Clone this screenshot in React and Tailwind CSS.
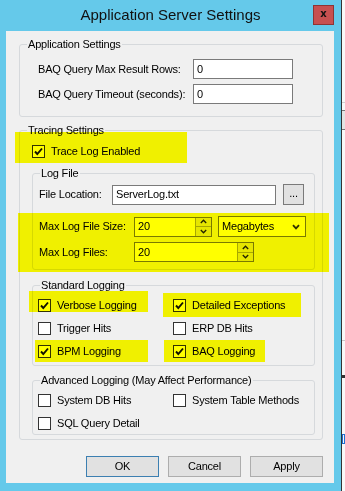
import React from "react";

// Dialog: Application Server Settings (Win8 style) with yellow marker highlights

const Check = ({ checked }) => (
  <span className="w-[13px] h-[13px] shrink-0 border border-[#333] bg-white flex items-center justify-center">
    {checked && (
      <svg width="11" height="11" viewBox="0 0 11 11">
        <path d="M2 5.5 L4.3 8 L9 2.5" fill="none" stroke="#111" strokeWidth="1.9" />
      </svg>
    )}
  </span>
);

const CheckRow = ({ checked, label }) => (
  <div className="flex items-center gap-[6px] h-[13px]">
    <Check checked={checked} />
    <span className="leading-[13px] whitespace-nowrap">{label}</span>
  </div>
);

const Group = ({ title, className, children }) => (
  <div className={`relative border border-[#d6d9dc] rounded-[3px] ${className}`}>
    <span className="absolute -top-[8px] left-[7px] bg-[#f0f0f0] px-[1px] leading-[14px] whitespace-nowrap">
      {title}
    </span>
    {children}
  </div>
);

const TextBox = ({ value, className }) => (
  <div className={`h-[20px] border border-[#7a7a7a] bg-white pl-[3px] flex items-center ${className}`}>
    {value}
  </div>
);

const Chevron = ({ up }) => (
  <svg width="7" height="5" viewBox="0 0 7 5">
    <path d={up ? "M0.8 4 L3.5 1.2 L6.2 4" : "M0.8 1 L3.5 3.8 L6.2 1"} fill="none" stroke="#222" strokeWidth="1.3" />
  </svg>
);

const Spin = ({ value, className }) => (
  <div className={`h-[20px] border border-[#7a7a7a] bg-white flex ${className}`}>
    <div className="flex-1 pl-[3px] flex items-center">{value}</div>
    <div className="w-[16px] flex flex-col bg-[#e6e6e6] border-l border-[#a8a8a8]">
      <div className="flex-1 flex items-center justify-center border-b border-[#a8a8a8]">
        <Chevron up />
      </div>
      <div className="flex-1 flex items-center justify-center">
        <Chevron />
      </div>
    </div>
  </div>
);

const Btn = ({ children, primary }) => (
  <div
    className={`w-[73px] h-[21px] flex items-center justify-center bg-[#e1e1e1] border ${
      primary ? "border-[#3c7fb1]" : "border-[#adadad]"
    }`}
  >
    {children}
  </div>
);

const highlights = [
  "left-[15px] top-[132px] w-[172px] h-[31px]",
  "left-[18px] top-[213px] w-[311px] h-[59px]",
  "left-[29px] top-[291px] w-[119px] h-[21px]",
  "left-[163px] top-[293px] w-[138px] h-[24px]",
  "left-[35px] top-[340px] w-[113px] h-[22px]",
  "left-[164px] top-[340px] w-[101px] h-[22px]",
];

export default function App() {
  return (
    <div className="flex w-[345px] h-[491px] bg-white text-[11px] tracking-[-0.2px] text-black font-['Liberation_Sans',Arial,sans-serif]">
      <div className="relative w-[341px] h-full bg-[#65c9ea] flex flex-col">
        {/* Title bar */}
        <div className="h-[31px] grid grid-cols-[1fr_auto_1fr] items-center">
          <div />
          <div className="text-[15px] tracking-normal text-[#111] -mt-[1px]">Application Server Settings</div>
          <div className="flex justify-end pr-[7px] self-start pt-[5px]">
            <div className="w-[21px] h-[20px] bg-[#c75050] border border-[#8e3434] flex items-center justify-center">
              <span className="text-[10px] font-bold leading-none font-['DejaVu_Sans',sans-serif] text-[#111] -mt-[2px]">x</span>
            </div>
          </div>
        </div>

        {/* Client area */}
        <div className="ml-[6px] w-[328px] h-[452px] bg-[#f0f0f0] flex flex-col">
          <Group title="Application Settings" className="ml-[13px] mt-[13px] w-[304px] h-[73px] pt-[14px] pl-[18px]">
            <div className="flex flex-col gap-[5px]">
              <div className="flex items-center">
                <span className="w-[155px]">BAQ Query Max Result Rows:</span>
                <TextBox value="0" className="w-[100px]" />
              </div>
              <div className="flex items-center">
                <span className="w-[155px]">BAQ Query Timeout (seconds):</span>
                <TextBox value="0" className="w-[100px]" />
              </div>
            </div>
          </Group>

          <Group title="Tracing Settings" className="ml-[13px] mt-[13px] w-[304px] h-[310px] pt-[14px] pl-[12px]">
            <CheckRow checked label="Trace Log Enabled" />

            <Group title="Log File" className="mt-[15px] w-[283px] h-[97px] pt-[10px] pl-[6px]">
              <div className="flex items-center h-[21px]">
                <span className="w-[73px]">File Location:</span>
                <TextBox value="ServerLog.txt" className="w-[164px] h-[19px] pl-[2px]" />
                <div className="ml-[7px] w-[21px] h-[21px] bg-[#e1e1e1] border border-[#7a7a7a] flex items-center justify-center pb-[3px]">
                  ...
                </div>
              </div>
              <div className="flex items-center h-[21px] mt-[11px]">
                <span className="w-[95px]">Max Log File Size:</span>
                <Spin value="20" className="w-[78px]" />
                <div className="ml-[6px] w-[88px] h-[21px] border border-[#7a7a7a] bg-white flex items-center justify-between pl-[3px] pr-[5px]">
                  <span>Megabytes</span>
                  <svg width="8" height="6" viewBox="0 0 8 6">
                    <path d="M1 1.2 L4 4.4 L7 1.2" fill="none" stroke="#333" strokeWidth="1.8" />
                  </svg>
                </div>
              </div>
              <div className="flex items-center h-[20px] mt-[5px]">
                <span className="w-[95px]">Max Log Files:</span>
                <Spin value="20" className="w-[120px]" />
              </div>
            </Group>

            <Group title="Standard Logging" className="mt-[15px] w-[283px] h-[81px] pt-[13px] pl-[5px]">
              <div className="grid grid-cols-[135px_1fr] gap-y-[10px]">
                <CheckRow checked label="Verbose Logging" />
                <CheckRow checked label="Detailed Exceptions" />
                <CheckRow label="Trigger Hits" />
                <CheckRow label="ERP DB Hits" />
                <CheckRow checked label="BPM Logging" />
                <CheckRow checked label="BAQ Logging" />
              </div>
            </Group>

            <Group title="Advanced Logging (May Affect Performance)" className="mt-[14px] w-[283px] h-[55px] pt-[13px] pl-[5px]">
              <div className="grid grid-cols-[135px_1fr] gap-y-[10px]">
                <CheckRow label="System DB Hits" />
                <CheckRow label="System Table Methods" />
                <CheckRow label="SQL Query Detail" />
              </div>
            </Group>
          </Group>

          <div className="mt-[16px] flex justify-end gap-[9px] pr-[11px]">
            <Btn primary>OK</Btn>
            <Btn>Cancel</Btn>
            <Btn>Apply</Btn>
          </div>
        </div>

        {/* marker highlights drawn over the screenshot */}
        {highlights.map((h, i) => (
          <div key={i} className={`absolute ${h} bg-[#ffff00] mix-blend-multiply pointer-events-none`} />
        ))}
      </div>

      {/* sliver of the window behind */}
      <div className="flex-1 border-l border-[#333] bg-[#f8f8f8] flex flex-col">
        <div className="h-[102px]" />
        <div className="h-px bg-[#d0d0d0]" />
        <div className="h-[7px]" />
        <div className="h-[20px] border-y border-[#777] bg-[#e4e4e4]" />
        <div className="h-[210px]" />
        <div className="h-px bg-[#c8c8c8]" />
        <div className="h-[34px]" />
        <div className="h-[3px] bg-[#333]" />
        <div className="h-[56px]" />
        <div className="h-[10px] border border-[#1e6fd0]" />
      </div>
    </div>
  );
}
